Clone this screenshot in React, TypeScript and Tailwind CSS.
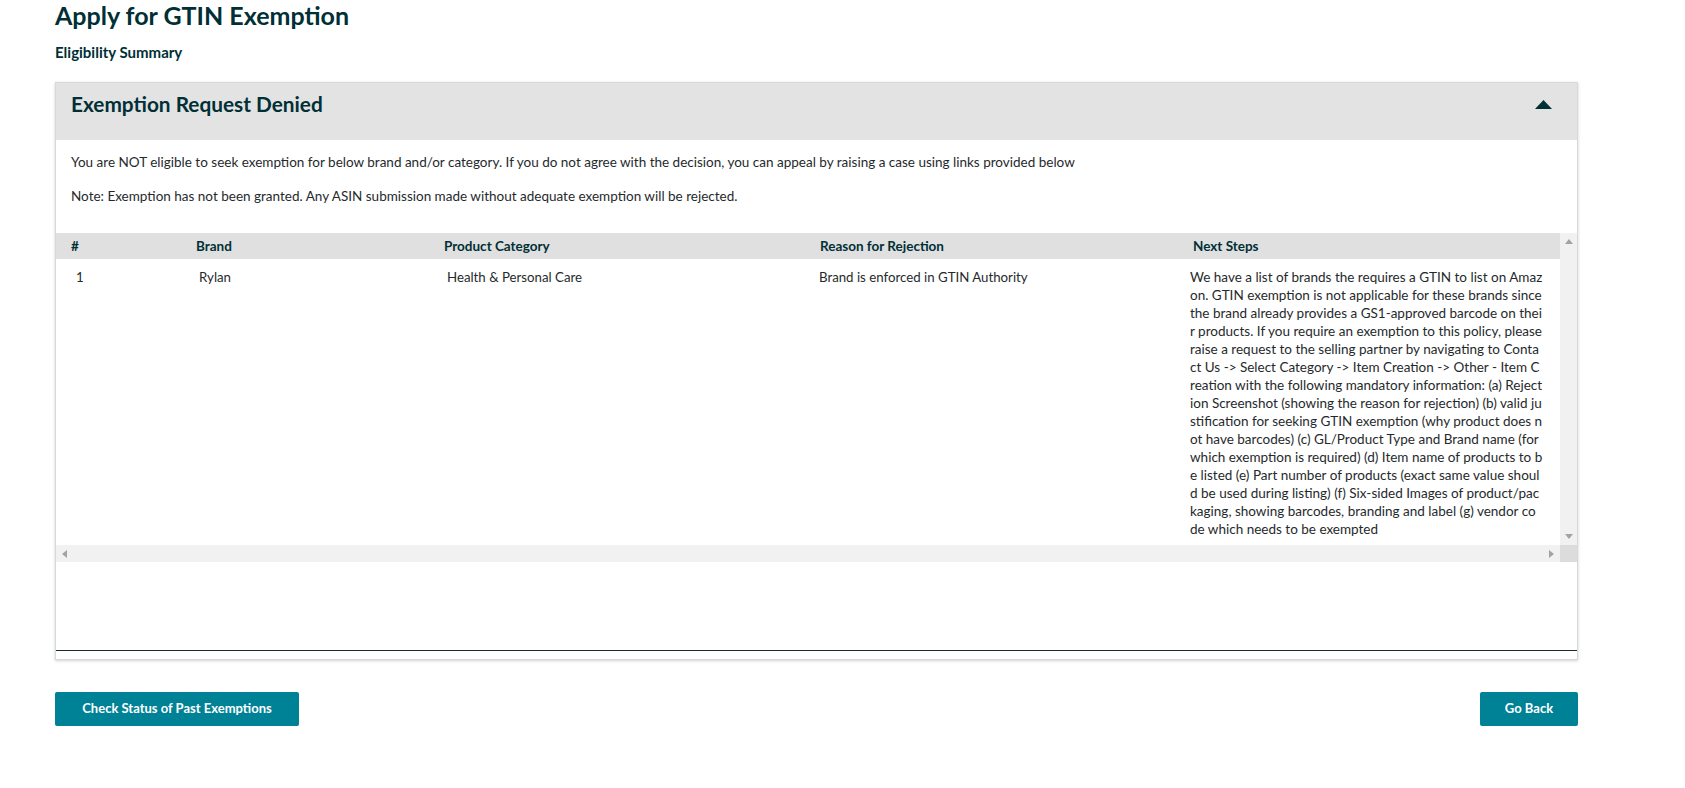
const nextSteps =
  "We have a list of brands the requires a GTIN to list on Amazon. GTIN exemption is not applicable for these brands since the brand already provides a GS1-approved barcode on their products. If you require an exemption to this policy, please raise a request to the selling partner by navigating to Contact Us -> Select Category -> Item Creation -> Other - Item Creation with the following mandatory information: (a) Rejection Screenshot (showing the reason for rejection) (b) valid justification for seeking GTIN exemption (why product does not have barcodes) (c) GL/Product Type and Brand name (for which exemption is required) (d) Item name of products to be listed (e) Part number of products (exact same value should be used during listing) (f) Six-sided Images of product/packaging, showing barcodes, branding and label (g) vendor code which needs to be exempted";

function Arrow(props: { dir: "up" | "down" | "left" | "right" }) {
  const pts = {
    up: "0,5 4,0 8,5",
    down: "0,0 8,0 4,5",
    left: "5,0 5,8 0,4",
    right: "0,0 0,8 5,4",
  }[props.dir];
  const vertical = props.dir === "up" || props.dir === "down";
  return (
    <svg width={vertical ? 8 : 5} height={vertical ? 5 : 8} viewBox={vertical ? "0 0 8 5" : "0 0 5 8"}>
      <polygon points={pts} fill="#a3a3a3" />
    </svg>
  );
}

export default function App() {
  return (
    <div className="w-[1685px] h-[788px] bg-white text-[#1f2a2c] font-['Lato','Liberation_Sans',sans-serif]">
      <div className="pl-[55px] w-[1578px]">
        <h1 className="text-[25px] leading-[30px] font-bold text-[#002f36]">Apply for GTIN Exemption</h1>
        <div className="mt-[13px] text-[15px] leading-[18px] font-bold text-[#002f36]">Eligibility Summary</div>

        <div className="mt-[21px] border border-[#d5d9d9] bg-white shadow-[0_1px_3px_rgba(0,0,0,0.18)]">
          <div className="h-[57px] bg-[#e3e3e3] flex items-start justify-between pl-[15px] pr-[25px] pt-[7px]">
            <h2 className="text-[20.8px] leading-[28px] font-bold text-[#002f36]">Exemption Request Denied</h2>
            <div className="h-[28px] flex items-center">
              <svg width="17" height="9" viewBox="0 0 17 9">
                <polygon points="0,9 8.5,0 17,9" fill="#002f36" />
              </svg>
            </div>
          </div>

          <div className="px-[15px] pt-[14px] text-[13.5px] leading-[16px]">
            <p>
              You are NOT eligible to seek exemption for below brand and/or category. If you do not agree with the
              decision, you can appeal by raising a case using links provided below
            </p>
            <p className="mt-[18px]">
              Note: Exemption has not been granted. Any ASIN submission made without adequate exemption will be rejected.
            </p>
          </div>

          <div className="mt-[29px] flex">
            <div className="flex-1">
              <div className="h-[26px] bg-[#e0e0e0] grid grid-cols-[125px_248px_376px_373px_1fr] items-center text-[13.5px] font-bold text-[#002f36]">
                <div className="pl-[15px]">#</div>
                <div className="pl-[15px]">Brand</div>
                <div className="pl-[15px]">Product Category</div>
                <div className="pl-[15px]">Reason for Rejection</div>
                <div className="pl-[15px]">Next Steps</div>
              </div>
              <div className="h-[286px] grid grid-cols-[125px_248px_376px_373px_1fr] pt-[9px] text-[13.25px] leading-[18px]">
                <div className="pl-[20px]">1</div>
                <div className="pl-[18px]">Rylan</div>
                <div className="pl-[18px]">Health &amp; Personal Care</div>
                <div className="pl-[14px]">Brand is enforced in GTIN Authority</div>
                <div className="pl-[12px] pr-[17px] text-[13.5px] break-all">{nextSteps}</div>
              </div>
            </div>
            <div className="w-[17px] bg-[#f1f1f1] flex flex-col items-center justify-between py-[6px]">
              <Arrow dir="up" />
              <Arrow dir="down" />
            </div>
          </div>
          <div className="h-[17px] flex">
            <div className="flex-1 bg-[#f1f1f1] flex items-center justify-between px-[6px]">
              <Arrow dir="left" />
              <Arrow dir="right" />
            </div>
            <div className="w-[17px] bg-[#dcdcdc]" />
          </div>

          <div className="h-[88px]" />
          <div className="h-px bg-[#1c2b2e]" />
          <div className="h-[8px]" />
        </div>

        <div className="mt-[32px] flex justify-between">
          <button className="w-[244px] h-[34px] rounded-[2px] bg-[#008296] text-white text-[13px] font-bold">
            Check Status of Past Exemptions
          </button>
          <button className="w-[98px] h-[34px] rounded-[2px] bg-[#008296] text-white text-[13px] font-bold">
            Go Back
          </button>
        </div>
      </div>
    </div>
  );
}
